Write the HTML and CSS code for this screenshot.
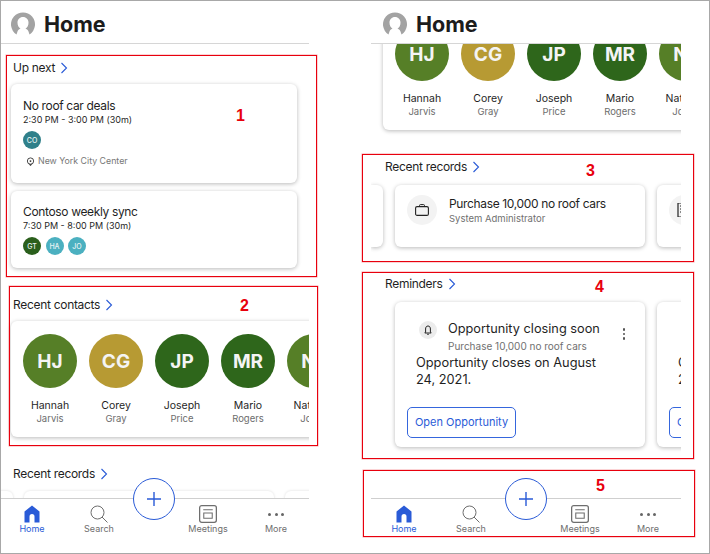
FILE: index.html
```html
<!DOCTYPE html>
<html lang="en">
<head>
    <meta charset="UTF-8">
    <title>Home</title>
    <link rel="stylesheet" href="styles.css">
</head>
<body>
    <svg class="defs">
        <symbol id="chev" viewBox="0 0 8 12"><path d="M1.500 1l5 5-5 5" fill="none" stroke="currentColor" stroke-width="1.100"/></symbol>
        <symbol id="user" viewBox="0 0 24 24"><path d="M5.500 22.500A12 12 0 1 1 18.500 22.500L17.500 19.500C16.800 17.800 15.500 17.200 14.500 16.800C16.500 15.500 17.500 13.300 17.500 10.800C17.500 7.500 15.300 5 12 5S6.500 7.500 6.500 10.800C6.500 13.300 7.500 15.500 9.500 16.800C8.500 17.200 7.200 17.800 6.500 19.500Z" fill="#a3a3a3"/></symbol>
        <symbol id="home" viewBox="0 0 16 18"><path d="M8 0.500L15.500 6.500V17.500H10.500V11.500A2.500 2.500 0 0 0 5.500 11.500V17.500H.5V6.500Z" fill="currentColor"/></symbol>
        <symbol id="search" viewBox="0 0 18 18"><circle cx="7.500" cy="7.500" r="6.500" fill="none" stroke="currentColor" stroke-width="1"/><path d="M12 12L17.500 17.500" stroke="currentColor" stroke-width="1"/></symbol>
        <symbol id="meet" viewBox="0 0 17 17"><rect x=".6" y=".6" width="15.800" height="15.800" rx="2" fill="none" stroke="currentColor" stroke-width="1.200"/><path d="M4 4.500H13M4.500 7.500H12.500V12.500H4.500Z" fill="none" stroke="currentColor"/></symbol>
        <symbol id="add" viewBox="0 0 14 14"><path d="M7 0V14M0 7H14" stroke="currentColor" stroke-width="1.400"/></symbol>
    </svg>

    <div class="frame">
        <section class="phone">
            <header class="top">
                <svg class="avatar"><use href="#user"/></svg>
                <h1>Home</h1>
            </header>
            <div class="scroll scroll-left">
                <h2 class="sec-title">Up next <svg class="chev"><use href="#chev"/></svg></h2>
                <div class="meeting">
                    <h3>No roof car deals</h3>
                    <p class="time">2:30 PM - 3:00 PM (30m)</p>
                    <div class="chips"><span class="chip teal">CO</span></div>
                    <p class="place">
                        <svg viewBox="0 0 10 10"><circle cx="5" cy="4.500" r="3.500" fill="none" stroke="#333" stroke-width="1"/><circle cx="5" cy="4.500" r="1" fill="#333"/><path d="M3 8l2 2 2-2z" fill="#333"/></svg>
                        New York City Center
                    </p>
                </div>
                <div class="meeting second">
                    <h3>Contoso weekly sync</h3>
                    <p class="time">7:30 PM - 8:00 PM (30m)</p>
                    <div class="chips">
                        <span class="chip dark">GT</span>
                        <span class="chip aqua">HA</span>
                        <span class="chip aqua">JO</span>
                    </div>
                </div>
                <h2 class="sec-title contacts-title">Recent contacts <svg class="chev"><use href="#chev"/></svg></h2>
                <div class="contacts">
                    <div class="contact"><span class="face olive">HJ</span><b>Hannah</b><i>Jarvis</i></div>
                    <div class="contact"><span class="face gold">CG</span><b>Corey</b><i>Gray</i></div>
                    <div class="contact"><span class="face forest">JP</span><b>Joseph</b><i>Price</i></div>
                    <div class="contact"><span class="face forest">MR</span><b>Mario</b><i>Rogers</i></div>
                    <div class="contact"><span class="face olive">NJ</span><b>Natasha</b><i>Jones</i></div>
                </div>
                <h2 class="sec-title records-title">Recent records <svg class="chev"><use href="#chev"/></svg></h2>
                <div class="peek">
                    <div class="peek-card small"></div>
                    <div class="peek-card wide"></div>
                    <div class="peek-card wide"></div>
                </div>
            </div>
            <nav class="tabs">
                <a class="tab on"><svg class="ic-home"><use href="#home"/></svg>Home</a>
                <a class="tab"><svg class="ic-search"><use href="#search"/></svg>Search</a>
                <span class="plus"><svg><use href="#add"/></svg></span>
                <a class="tab"><svg class="ic-meet"><use href="#meet"/></svg>Meetings</a>
                <a class="tab"><span class="dots"><s></s><s></s><s></s></span>More</a>
            </nav>
        </section>

        <section class="phone phone-right">
            <header class="top">
                <svg class="avatar"><use href="#user"/></svg>
                <h1>Home</h1>
            </header>
            <div class="scroll scroll-right">
                <div class="contacts contacts-cut">
                    <div class="contact"><span class="face olive">HJ</span><b>Hannah</b><i>Jarvis</i></div>
                    <div class="contact"><span class="face gold">CG</span><b>Corey</b><i>Gray</i></div>
                    <div class="contact"><span class="face forest">JP</span><b>Joseph</b><i>Price</i></div>
                    <div class="contact"><span class="face forest">MR</span><b>Mario</b><i>Rogers</i></div>
                    <div class="contact"><span class="face olive">NJ</span><b>Natasha</b><i>Jones</i></div>
                </div>
                <h2 class="sec-title r-records">Recent records <svg class="chev"><use href="#chev"/></svg></h2>
                <div class="rec-row">
                    <div class="rec edge"></div>
                    <div class="rec">
                        <span class="rec-ic">
                            <svg viewBox="0 0 14 12"><rect x=".6" y="2.600" width="12.800" height="8.800" rx="1.500" fill="none" stroke="#222" stroke-width="1.100"/><path d="M4.500 2.600V1.500Q4.500 .6 5.500 .6H8.500Q9.500 .6 9.500 1.500V2.600" fill="none" stroke="#222"/></svg>
                        </span>
                        <div>
                            <h3>Purchase 10,000 no roof cars</h3>
                            <p>System Administrator</p>
                        </div>
                    </div>
                    <div class="rec">
                        <span class="rec-ic">
                            <svg viewBox="0 0 14 14"><path d="M1 0H9V14H1Z" fill="none" stroke="#222" stroke-width="1.200"/><path d="M3 3H7M3 6H7M3 9H7" stroke="#222"/></svg>
                        </span>
                    </div>
                </div>
                <h2 class="sec-title r-reminders">Reminders <svg class="chev"><use href="#chev"/></svg></h2>
                <div class="rem-row">
                    <div class="rem">
                        <div class="rem-head">
                            <span class="bell">
                                <svg viewBox="0 0 10 10"><path d="M5 1C3.300 1 2.600 2.300 2.600 4V7L1.800 8H8.200L7.400 7V4C7.400 2.300 6.700 1 5 1ZM4.200 9.300H5.800" fill="none" stroke="#222"/></svg>
                            </span>
                            <div>
                                <h3>Opportunity closing soon</h3>
                                <p>Purchase 10,000 no roof cars</p>
                            </div>
                            <span class="kebab"><s></s><s></s><s></s></span>
                        </div>
                        <p class="rem-body">Opportunity closes on August 24, 2021.</p>
                        <a class="open">Open Opportunity</a>
                    </div>
                    <div class="rem">
                        <div class="rem-head"></div>
                        <p class="rem-body">Opportunity closes on August 24, 2021.</p>
                        <a class="open">Open Opportunity</a>
                    </div>
                </div>
            </div>
            <nav class="tabs">
                <a class="tab on"><svg class="ic-home"><use href="#home"/></svg>Home</a>
                <a class="tab"><svg class="ic-search"><use href="#search"/></svg>Search</a>
                <span class="plus"><svg><use href="#add"/></svg></span>
                <a class="tab"><svg class="ic-meet"><use href="#meet"/></svg>Meetings</a>
                <a class="tab"><span class="dots"><s></s><s></s><s></s></span>More</a>
            </nav>
        </section>
    </div>

    <!-- annotation boxes over the screenshots -->
    <div class="mark m1"><span>1</span></div>
    <div class="mark m2"><span>2</span></div>
    <div class="mark m3"><span>3</span></div>
    <div class="mark m4"><span>4</span></div>
    <div class="mark m5"><span>5</span></div>
</body>
</html>
```

FILE: styles.css
```css
* {
    box-sizing: border-box;
}
html, body {
    margin: 0;
    height: 554px;
    overflow: hidden;
    background: white;
}
body {
    font-family: Inter, "Liberation Sans", sans-serif;
    color: #1f1f1f;
    position: relative;
}
h1, h2, h3, p {
    margin: 0;
    font-weight: normal;
}
.defs {
    display: none;
}
.frame {
    display: flex;
    gap: 62px;
    width: 710px;
    height: 554px;
    border: 1px solid #a8a8a8;
}
.phone {
    width: 308px;
    height: 552px;
    display: flex;
    flex-direction: column;
    position: relative;
    overflow: hidden;
}
.phone-right {
    width: 310px;
}
.top {
    height: 43px;
    flex: none;
    display: flex;
    align-items: center;
    gap: 9px;
    padding: 4px 0 0 10px;
    border-bottom: 1px solid #d6d6d6;
}
.phone-right .top {
    padding-left: 12px;
}
.avatar {
    width: 24px;
    height: 24px;
}
h1 {
    font-size: 21.500px;
    font-weight: 700;
    color: #1c1c1c;
}
.scroll {
    height: 454px;
    flex: none;
    overflow: hidden;
}
.scroll-left {
    padding: 15px 0 0 10px;
}
.scroll-right {
    padding-left: 12px;
}
.sec-title {
    font-size: 12px;
    letter-spacing: -0.3px;
    line-height: 18px;
    display: flex;
    align-items: center;
    gap: 5px;
    padding-left: 2px;
}
.chev {
    width: 8px;
    height: 12px;
    color: #2a5bd7;
}
.meeting {
    width: 286px;
    height: 99px;
    margin-top: 7px;
    padding: 14px 12px;
    background: white;
    border-radius: 6px;
    box-shadow: 0 1px 4px rgba(0, 0, 0, 0.28);
}
.meeting.second {
    height: 77px;
    margin-top: 8px;
    padding-top: 13px;
}
.meeting h3 {
    font-size: 12px;
    line-height: 16px;
    letter-spacing: -0.35px;
}
.time {
    font-size: 9px;
    line-height: 12px;
}
.chips {
    display: flex;
    gap: 4.500px;
    margin-top: 5px;
}
.chip {
    width: 18px;
    height: 18px;
    border-radius: 50%;
    color: #e8f4f4;
    font-size: 7px;
    font-weight: 500;
    display: flex;
    align-items: center;
    justify-content: center;
}
.teal { background: #30808a; }
.dark { background: #2a5f1c; }
.aqua { background: #4bb0c0; }
.place {
    display: flex;
    align-items: center;
    gap: 3px;
    font-size: 8.800px;
    color: #777;
    margin: 6px 0 0 3px;
    line-height: 12px;
}
.place svg {
    width: 9px;
    height: 9px;
}
.contacts-title {
    margin-top: 28px;
}
.contacts {
    height: 116px;
    width: 320px;
    margin-top: 7px;
    padding: 13px 0 0 12px;
    display: flex;
    gap: 12px;
    border-radius: 6px;
    box-shadow: 0 1px 4px rgba(0, 0, 0, 0.28);
}
.contact {
    width: 54px;
    flex: none;
    display: flex;
    flex-direction: column;
    align-items: center;
    white-space: nowrap;
}
.face {
    width: 54px;
    height: 54px;
    flex: none;
    border-radius: 50%;
    color: #f4f4f4;
    font-size: 19px;
    font-weight: 700;
    display: flex;
    align-items: center;
    justify-content: center;
    margin-bottom: 11px;
}
.olive { background: #567f27; }
.gold { background: #b79a33; }
.forest { background: #2e661b; }
.contact b {
    font-size: 10.500px;
    font-weight: normal;
    line-height: 14px;
}
.contact i {
    font-size: 9.500px;
    font-style: normal;
    color: #6d6d6d;
    line-height: 12px;
}
.records-title {
    margin-top: 28px;
}
.peek {
    display: flex;
    gap: 11px;
    margin: 8px 0 0 -24px;
}
.peek-card {
    height: 60px;
    flex: none;
    border-radius: 6px;
    box-shadow: 0 0 3px rgba(0, 0, 0, 0.14);
}
.peek-card.small { width: 26px; }
.peek-card.wide { width: 250px; }
.contacts-cut {
    margin-top: -30px;
}
.r-records {
    margin-top: 28px;
}
.rec-row {
    display: flex;
    gap: 12px;
    margin-top: 9px;
}
.rec {
    width: 250px;
    height: 62px;
    flex: none;
    padding: 10px 12px;
    display: flex;
    gap: 12px;
    border-radius: 6px;
    background: white;
    box-shadow: 0 1px 4px rgba(0, 0, 0, 0.28);
}
.rec.edge {
    width: 12px;
    margin-left: -12px;
    padding: 0;
    border-radius: 0 6px 6px 0;
}
.rec-ic {
    width: 30px;
    height: 30px;
    flex: none;
    border-radius: 50%;
    background: #f3f3f3;
    display: flex;
    align-items: center;
    justify-content: center;
}
.rec-ic svg {
    width: 14px;
    height: 14px;
}
.rec h3 {
    font-size: 12px;
    line-height: 16px;
    letter-spacing: -0.35px;
    margin-top: 1px;
}
.rec p {
    font-size: 9.500px;
    color: #707070;
    line-height: 14px;
}
.r-reminders {
    margin-top: 28px;
}
.rem-row {
    display: flex;
    gap: 12px;
    margin: 9px 0 0 12px;
}
.rem {
    width: 250px;
    height: 145px;
    flex: none;
    padding: 18px 12px 0;
    border-radius: 6px;
    background: white;
    box-shadow: 0 1px 4px rgba(0, 0, 0, 0.28);
}
.rem-head {
    display: flex;
    gap: 11px;
    padding-left: 12px;
    height: 35px;
}
.bell {
    width: 18px;
    height: 18px;
    flex: none;
    margin-top: 1px;
    border-radius: 50%;
    background: #ececec;
    display: flex;
    align-items: center;
    justify-content: center;
}
.bell svg {
    width: 10px;
    height: 10px;
}
.rem-head h3 {
    font-size: 12.750px;
    line-height: 18px;
}
.rem-head p {
    font-size: 10px;
    line-height: 16px;
    color: #707070;
    white-space: nowrap;
}
.kebab {
    display: flex;
    flex-direction: column;
    gap: 2px;
    margin: 8px 8px 0 auto;
}
.kebab s {
    width: 2.500px;
    height: 2.500px;
    border-radius: 50%;
    background: #555;
}
.rem-body {
    font-size: 12.800px;
    line-height: 16.500px;
    margin-left: 9px;
    width: 200px;
}
.open {
    display: block;
    width: 109px;
    height: 31px;
    margin-top: 19px;
    border: 1px solid #3566dd;
    border-radius: 5px;
    color: #2a5bd7;
    font-size: 11px;
    line-height: 29px;
    text-align: center;
    white-space: nowrap;
}
.tabs {
    position: absolute;
    left: 0;
    right: 0;
    top: 497px;
    height: 55px;
    background: white;
    border-top: 1px solid #cfcfcf;
    display: grid;
    grid-template-columns: 62px 72px 38px 70px 66px;
    justify-content: start;
}
.phone-right .tabs {
    padding-left: 2px;
}
.tab {
    display: flex;
    flex-direction: column;
    align-items: center;
    font-size: 9px;
    line-height: 11px;
    color: #6e6e6e;
    padding-top: 6px;
}
.tab.on {
    color: #2a5bd7;
}
.tab svg, .dots {
    width: 18px;
    height: 18px;
}
.dots {
    display: flex;
    align-items: center;
    justify-content: space-between;
    padding: 0 1px;
}
.dots s {
    width: 3px;
    height: 3px;
    border-radius: 50%;
    background: #666;
}
.plus {
    width: 42px;
    height: 42px;
    margin-top: -21px;
    justify-self: center;
    border: 1px solid #2a5bd7;
    border-radius: 50%;
    background: white;
    color: #2a5bd7;
    display: flex;
    align-items: center;
    justify-content: center;
}
.plus svg {
    width: 14px;
    height: 14px;
}
/* annotation boxes */
.mark {
    position: absolute;
    border: 1px solid #e8000d;
    box-shadow: 0 0 0 0.5px rgba(232, 0, 13, 0.35);
    color: #e8000d;
    font-family: "Liberation Sans", sans-serif;
    font-weight: 700;
    font-size: 16px;
}
.mark span {
    position: absolute;
}
.m1 { left: 6px; top: 55px; width: 311px; height: 222px; }
.m1 span { left: 229px; top: 51px; }
.m2 { left: 9px; top: 286px; width: 309px; height: 160px; }
.m2 span { left: 230px; top: 10px; }
.m3 { left: 362px; top: 154px; width: 332px; height: 108px; }
.m3 span { left: 223px; top: 7px; }
.m4 { left: 362px; top: 272px; width: 332px; height: 187px; }
.m4 span { left: 232px; top: 5px; }
.m5 { left: 363px; top: 470px; width: 332px; height: 67px; }
.m5 span { left: 232px; top: 6px; }
```
